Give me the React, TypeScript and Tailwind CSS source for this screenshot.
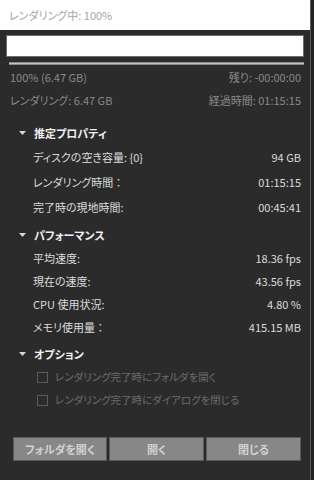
import React from "react";

const font = { fontFamily: '"Noto Sans CJK JP", "Noto Sans", sans-serif' };

function Caret() {
  return (
    <svg width="7" height="4" viewBox="0 0 7 4" className="mr-[8px] ml-[19px]">
      <polygon points="0,0 7,0 3.5,4" fill="#d8d8d8" />
    </svg>
  );
}

function SectionHeader({ title }: { title: string }) {
  return (
    <div className="h-[18px] flex items-center text-[11px] font-bold text-[#f0f0f0]">
      <Caret />
      {title}
    </div>
  );
}

function Row({ label, value, h }: { label: string; value: string; h: string }) {
  return (
    <div className={`${h} flex items-center justify-between pl-[33px] pr-[9px] text-[11px] text-[#dcdcdc]`}>
      <span>{label}</span>
      <span>{value}</span>
    </div>
  );
}

function Check({ label }: { label: string }) {
  return (
    <div className="h-[23px] flex items-center pl-[37px] text-[10.5px] text-[#6c6c6c]">
      <span className="w-[11px] h-[11px] border border-[#5c5c5c] mr-[7px]" />
      {label}
    </div>
  );
}

export default function App() {
  return (
    <div
      className="w-[314px] h-[480px] bg-[#232323] flex leading-none [font-feature-settings:'palt']"
      style={font}
    >
      <div className="w-[311px] h-full bg-[#2b2b2b] border-r border-[#5e5e5e] flex flex-col">
        {/* Title */}
        <div className="h-[30px] bg-white flex items-center pl-[9px] text-[11px] text-[#a5a5a5]">
          レンダリング中: 100%
        </div>

        {/* Progress */}
        <div className="mt-[5px] mx-[6px] h-[22px] bg-white border border-[#6c6c6c]" />
        <div className="mt-[5px] ml-[9px] mr-[6px] h-[3px] bg-[#c4c4c4] border-y border-[#8a8a8a]" />

        {/* Stats */}
        <div className="mt-[3px] h-[18px] flex items-center justify-between pl-[10px] pr-[9px] text-[11px] text-[#8a8a8a]">
          <span>100% (6.47 GB)</span>
          <span>残り: -00:00:00</span>
        </div>
        <div className="mt-[5px] h-[18px] flex items-center justify-between pl-[10px] pr-[9px] text-[11px] text-[#8a8a8a]">
          <span>レンダリング: 6.47 GB</span>
          <span>経過時間: 01:15:15</span>
        </div>

        {/* 推定プロパティ */}
        <div className="mt-[15px]">
          <SectionHeader title="推定プロパティ" />
        </div>
        <div className="mt-[3px]">
          <Row h="h-[25px]" label="ディスクの空き容量: {0}" value="94 GB" />
          <Row h="h-[25px]" label="レンダリング時間 ：" value="01:15:15" />
          <Row h="h-[25px]" label="完了時の現地時間:" value="00:45:41" />
        </div>

        {/* パフォーマンス */}
        <div className="mt-[6px]">
          <SectionHeader title="パフォーマンス" />
        </div>
        <div className="mt-[3px]">
          <Row h="h-[23px]" label="平均速度:" value="18.36 fps" />
          <Row h="h-[23px]" label="現在の速度:" value="43.56 fps" />
          <Row h="h-[23px]" label="CPU 使用状況:" value="4.80 %" />
          <Row h="h-[23px]" label="メモリ使用量 ：" value="415.15 MB" />
        </div>

        {/* オプション */}
        <div className="mt-[6px]">
          <SectionHeader title="オプション" />
        </div>
        <div className="mt-[3px]">
          <Check label="レンダリング完了時にフォルダを開く" />
          <Check label="レンダリング完了時にダイアログを閉じる" />
        </div>

        {/* Buttons */}
        <div className="mt-[25px] ml-[13px] flex gap-[2px]">
          {["フォルダを開く", "開く", "閉じる"].map((b, i) => (
            <div
              key={b}
              className={`${i === 0 ? "w-[94px]" : "w-[95px]"} h-[24px] bg-[#878787] border border-[#5a5a5a] flex items-center justify-center text-[11px] font-bold text-[#d2d2d2]`}
            >
              {b}
            </div>
          ))}
        </div>
      </div>
    </div>
  );
}
